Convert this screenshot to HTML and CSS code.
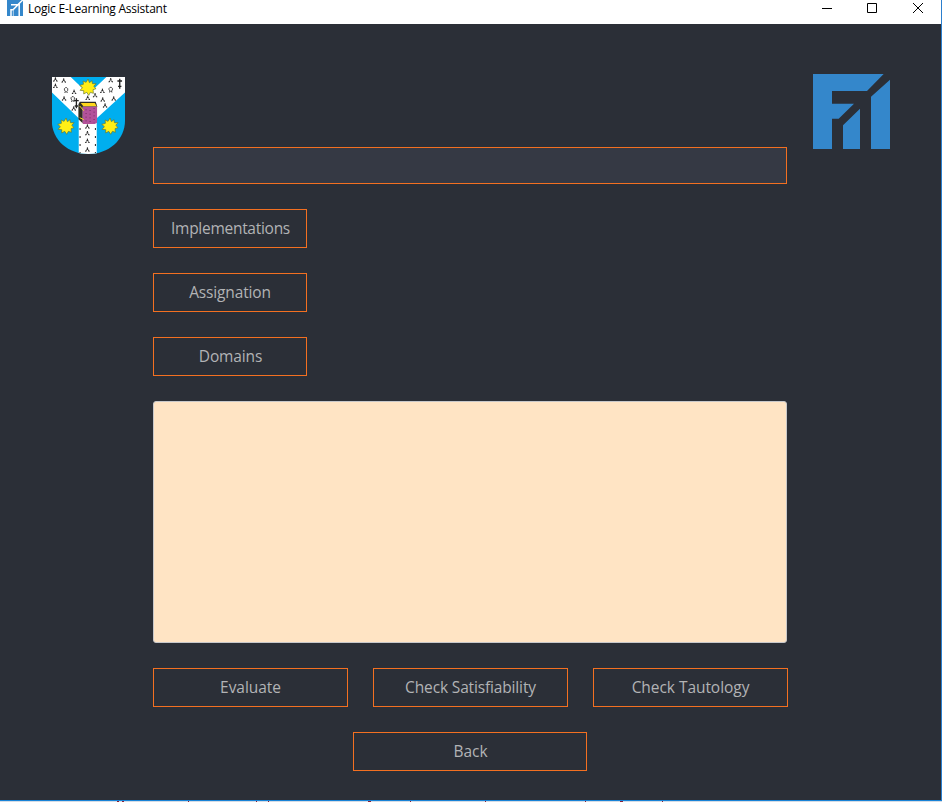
FILE: index.html
```html
<!DOCTYPE html>
<html lang="en">
<head>
<meta charset="utf-8">
<title>Logic E-Learning Assistant</title>
<link rel="stylesheet" href="styles.css">
</head>
<body>
<div class="window">
  <header class="titlebar">
    <svg class="app-icon" viewBox="0 0 16 16">
      <path fill="#3487cb" d="M0 0H16V16H0z"/>
      <path fill="none" stroke="#fff" stroke-width="1.5" d="M4 4.7H10.8L15.8 0M4 16V9.7H6L11 4.7M12.2 16V4"/>
      <path fill="none" stroke="#d7e7f4" stroke-width=".8" d="M6.3 9.5V16"/>
    </svg>
    <h1 class="title">Logic E-Learning Assistant</h1>
    <div class="controls">
      <svg viewBox="0 0 10 10"><path d="M1 5.5H11"/></svg>
      <svg viewBox="0 0 10 10"><path d="M.5 .5H9.5V9.5H.5z"/></svg>
      <svg viewBox="0 0 10 10"><path d="M0 0L10 10M10 0L0 10"/></svg>
    </div>
  </header>
  <main class="content">
    <svg class="crest" viewBox="21 21 220 231">
      <defs>
        <clipPath id="shield"><path d="M21 21H241V150C241 212 190 252 131 252S21 212 21 150z"/></clipPath>
        <path id="star" d="M0-25L4-14 12-20 13-11 24-11 17-3 24 4 15 7 16 18 7 15 2 24-4 15-13 20-13 10-24 9-17 1-25-6-14-9-15-19-6-15z" fill="#ffef16" stroke="#67752c" stroke-width="2"/>
        <path id="mark" d="M0-7V-2M-5 6V3H-2M2 3H5V6M-3-1H3" fill="none" stroke="#171717" stroke-width="3"/>
        <path id="arc" d="M-5 6H-2V3L-5-1V-5L-2-8H2L5-5V0L2 3V6H5" fill="none" stroke="#222" stroke-width="2.4"/>
        <path id="cross" d="M0-14V16M-7-7H7M-5 9H5" fill="none" stroke="#222" stroke-width="4"/>
      </defs>
      <g clip-path="url(#shield)">
        <path fill="#00aeef" d="M21 21H241V252H21z"/>
        <path fill="#fff" d="M21 21H78L131 72 185 21H241V67L156 145V252H102V145L21 67z"/>
        <use href="#mark" x="32" y="29"/><use href="#mark" x="57" y="32"/>
        <use href="#mark" x="32" y="48"/><use href="#arc" x="64" y="61"/>
        <use href="#mark" x="58" y="86"/><use href="#arc" x="84" y="88"/>
        <use href="#mark" x="88" y="66"/><use href="#mark" x="87" y="116"/>
        <use href="#cross" x="95" y="99"/><use href="#cross" x="225" y="40"/>
        <use href="#mark" x="198" y="31"/><use href="#arc" x="198" y="60"/>
        <use href="#mark" x="173" y="63"/><use href="#mark" x="174" y="89"/>
        <use href="#mark" x="207" y="86"/><use href="#mark" x="151" y="76"/>
        <use href="#mark" x="181" y="107"/><use href="#mark" x="129" y="84"/>
        <use href="#mark" x="128" y="170"/><use href="#mark" x="128" y="190"/>
        <use href="#mark" x="128" y="213"/><use href="#mark" x="128" y="239"/>
        <path fill="none" stroke="#222" stroke-width="3" stroke-dasharray="6 18" d="M106 174V250M152 174V250"/>
      </g>
      <use href="#star" x="130" y="52"/><use href="#star" x="64" y="169"/><use href="#star" x="196" y="169"/>
      <path fill="#302e24" d="M105 95H153L158 110H114V160L101 148V103z"/>
      <path fill="#ffd71c" d="M108 99H150L156 109H116z"/>
      <path fill="#b3529a" d="M114 110H157V158L150 162H114z"/>
      <path fill="none" stroke="#ffdf20" stroke-width="3" d="M105 108L117 122M105 143L117 149"/>
      <path fill="none" stroke="#70305f" stroke-width="3" stroke-dasharray="3 8" d="M124 118V156M136 120V157M148 114V159"/>
    </svg>
    <section class="panel">
      <input class="formula" type="text" aria-label="Formula">
      <button class="btn small implementations">Implementations</button>
      <button class="btn small assignation">Assignation</button>
      <button class="btn small">Domains</button>
      <div class="output"></div>
      <div class="actions">
        <button class="btn">Evaluate</button>
        <button class="btn satisfiability">Check Satisfiability</button>
        <button class="btn">Check Tautology</button>
      </div>
      <button class="btn back">Back</button>
    </section>
    <svg class="logo" viewBox="24 24 231 225">
      <path d="M24 24H236L186 75H81V113H147L101 158H81V249H24zM114 178L165 128V249H114zM198 92L255 41V249H198z"/>
    </svg>
  </main>
</div>
<svg class="backdrop" viewBox="0 0 942 1"><path d="M117 .5h2M122 .5h2M188 .5h1M256 .5h1M268 .5h1M368 .5h3M410 .5h1M485 .5h1M585 .5h1M620 .5h3M662 .5h1"/></svg>
</body>
</html>
```

FILE: styles.css
```css
* { box-sizing: border-box; }
body { margin: 0; width: 942px; height: 802px; overflow: hidden; background: #d6dce4; font-family: "Open Sans", "Noto Sans", sans-serif; }
.window { display: flex; flex-direction: column; height: 801px; border-right: 1px solid #2b7fce; border-bottom: 1px solid #1883d7; }
.titlebar { display: flex; flex: 0 0 24px; padding-left: 7px; background: #fff; }
.app-icon { width: 16px; height: 16px; }
.title { margin: 0 auto 0 5px; font-size: 12px; font-weight: 400; line-height: 18px; letter-spacing: -0.23px; color: #000; white-space: nowrap; }
.controls { display: flex; gap: 36px; padding: 3px 18px 0 0; }
.controls svg { width: 10px; height: 10px; fill: none; stroke: #000; stroke-width: 1; overflow: visible; }
.content { display: flex; align-items: flex-start; flex: 1; background: #2b2f37; }
.crest { flex: none; width: 74px; height: 77px; margin: 53px 27px 0 52px; transform: translateX(-.6px); }
.logo { flex: none; width: 77px; height: 75px; margin: 50px 0 0 26px; fill: #3487cb; }
.panel { display: flex; flex-direction: column; flex: none; gap: 25px; width: 634px; padding-top: 123px; }
.formula { width: 634px; height: 37px; padding: 0 10px; border: 1px solid #f37021; border-radius: 0; background: #353944; color: #b5b5b5; outline: 0; }
.btn { width: 195px; height: 39px; padding: 0 0 1px; flex: none; border: 1px solid #f37021; background: transparent; color: #b2b3b5; font: 400 15.5px/36px "Open Sans", "Noto Sans", sans-serif; letter-spacing: -0.05px; white-space: nowrap; }
.small { width: 154px; letter-spacing: -0.15px; padding-left: 1px; }
.implementations { letter-spacing: -0.28px; }
.assignation { padding-left: 0; }
.satisfiability { letter-spacing: -0.15px; }
.output { height: 242px; border: 1px solid #c8c8ca; border-radius: 3px; background: #ffe4c4; }
.actions { display: flex; gap: 25px; }
.back { width: 234px; align-self: center; padding-left: 1px; }
.backdrop { display: block; width: 942px; height: 1px; stroke: #8b2038; }
```
